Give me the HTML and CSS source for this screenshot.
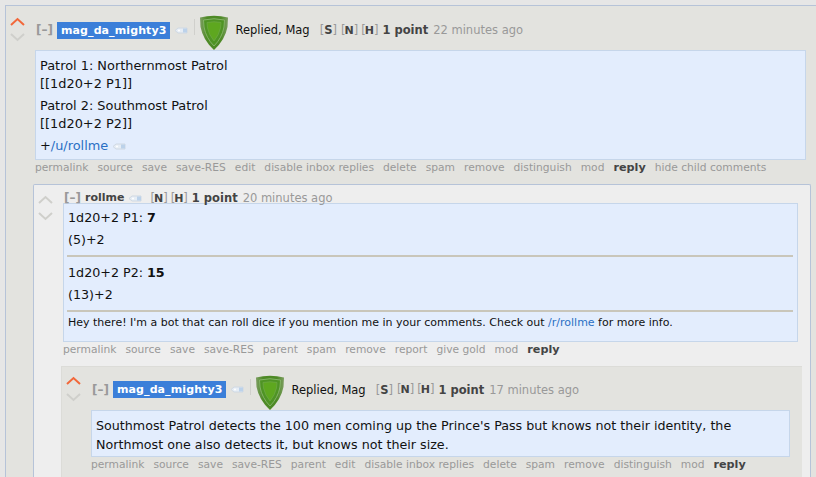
FILE: index.html
```html
<!DOCTYPE html>
<html lang="en">
<head>
<meta charset="utf-8">
<title>Comments</title>
<link rel="stylesheet" href="styles.css">
</head>
<body>
<svg class="defs" width="0" height="0">
  <defs>
    <linearGradient id="shield-edge" x1="0" y1="0" x2="1" y2="0">
      <stop offset="0" stop-color="#7d9e62"/>
      <stop offset="0.25" stop-color="#4e8a26"/>
      <stop offset="0.75" stop-color="#4e8a26"/>
      <stop offset="1" stop-color="#7d9e62"/>
    </linearGradient>
    <g id="shield">
      <path d="M0 2.5 Q14 -1 28 2.5 L27.5 12 Q25 25 14 35 Q3 25 .5 12Z" fill="url(#shield-edge)"/>
      <path d="M3.5 5 Q14 2.5 24.5 5 L24 12 Q22 23 14 31 Q6 23 4 12Z" fill="#4f9424" stroke="#84b368" stroke-width="1"/>
      <path d="M7 7.5 Q14 6 21 7.5 L20.5 13 Q19 20 14 26 Q9 20 7.5 13Z" fill="#5ea71f" stroke="#6ea84a" stroke-width=".7"/>
    </g>
    <g id="tag">
      <path d="M0 3.5 L3 1 H12 V6 H3Z" fill="#e6edf5" stroke="#cfd8e2" stroke-width="1"/>
      <rect x="8" y="1.5" width="4" height="4" fill="#bcd2ea"/>
      <circle cx="4" cy="3.5" r="1" fill="#fff"/>
    </g>
    <path id="up" d="M1 8 L7.5 2 L14 8" fill="none" stroke-width="2"/>
    <path id="down" d="M1 2 L7.5 8 L14 2" fill="none" stroke-width="2"/>
  </defs>
</svg>

<main class="thing level-a">
  <div class="votes">
    <svg class="arrow up-on" width="15" height="10"><use href="#up"/></svg>
    <svg class="arrow" width="15" height="10"><use href="#down"/></svg>
  </div>
  <div class="entry">
    <div class="tagline">
      <span class="collapse">[–]</span>
      <span class="author op">mag_da_mighty3</span>
      <svg class="tag" width="13" height="7"><use href="#tag"/></svg>
      <span class="rule"></span>
      <svg class="shield" width="28" height="36"><use href="#shield"/></svg>
      <span class="flair">Replied, Mag</span>
      <span class="mark"><span class="br">[</span><b>S</b><span class="br">]</span></span>
      <span class="mark mark-sm"><span class="br">[</span><b>N</b><span class="br">]</span></span>
      <span class="mark mark-sm"><span class="br">[</span><b>H</b><span class="br">]</span></span>
      <b class="score">1 point</b>
      <span class="time">22 minutes ago</span>
    </div>
    <div class="body body-a">
      <p>Patrol 1: Northernmost Patrol<br>[[1d20+2 P1]]</p>
      <p>Patrol 2: Southmost Patrol<br>[[1d20+2 P2]]</p>
      <p class="last">+<a href="#">/u/rollme</a><svg class="tag" width="13" height="7"><use href="#tag"/></svg></p>
    </div>
    <ul class="buttons">
      <li>permalink</li><li>source</li><li>save</li><li>save-RES</li><li>edit</li><li>disable inbox replies</li><li>delete</li><li>spam</li><li>remove</li><li>distinguish</li><li>mod</li><li class="reply">reply</li><li>hide child comments</li>
    </ul>

    <section class="thing level-b">
      <div class="votes votes-b">
        <svg class="arrow" width="15" height="10"><use href="#up"/></svg>
        <svg class="arrow" width="15" height="10"><use href="#down"/></svg>
      </div>
      <div class="entry">
        <div class="tagline tagline-b">
          <span class="collapse">[–]</span>
          <span class="author plain">rollme</span>
          <svg class="tag" width="13" height="7"><use href="#tag"/></svg>
          <span class="mark mark-sm mark-gap"><span class="br">[</span><b>N</b><span class="br">]</span></span>
          <span class="mark mark-sm"><span class="br">[</span><b>H</b><span class="br">]</span></span>
          <b class="score">1 point</b>
          <span class="time">20 minutes ago</span>
        </div>
        <div class="body body-b">
          <p>1d20+2 P1: <b>7</b></p>
          <p>(5)+2</p>
          <hr>
          <p>1d20+2 P2: <b>15</b></p>
          <p>(13)+2</p>
          <hr>
          <p class="small">Hey there! I'm a bot that can roll dice if you mention me in your comments. Check out <a href="#">/r/rollme</a> for more info.</p>
        </div>
        <ul class="buttons">
          <li>permalink</li><li>source</li><li>save</li><li>save-RES</li><li>parent</li><li>spam</li><li>remove</li><li>report</li><li>give gold</li><li>mod</li><li class="reply">reply</li>
        </ul>

        <section class="thing level-c">
          <div class="votes votes-c">
            <svg class="arrow up-on" width="15" height="10"><use href="#up"/></svg>
            <svg class="arrow" width="15" height="10"><use href="#down"/></svg>
          </div>
          <div class="entry">
            <div class="tagline tagline-c">
              <span class="collapse">[–]</span>
              <span class="author op">mag_da_mighty3</span>
              <svg class="tag" width="13" height="7"><use href="#tag"/></svg>
              <span class="rule"></span>
              <svg class="shield" width="28" height="36"><use href="#shield"/></svg>
              <span class="flair">Replied, Mag</span>
              <span class="mark"><span class="br">[</span><b>S</b><span class="br">]</span></span>
              <span class="mark mark-sm"><span class="br">[</span><b>N</b><span class="br">]</span></span>
              <span class="mark mark-sm"><span class="br">[</span><b>H</b><span class="br">]</span></span>
              <b class="score">1 point</b>
              <span class="time">17 minutes ago</span>
            </div>
            <div class="body body-c">
              <p>Southmost Patrol detects the 100 men coming up the Prince's Pass but knows not their identity, the Northmost one also detects it, but knows not their size.</p>
            </div>
            <ul class="buttons">
              <li>permalink</li><li>source</li><li>save</li><li>save-RES</li><li>parent</li><li>edit</li><li>disable inbox replies</li><li>delete</li><li>spam</li><li>remove</li><li>distinguish</li><li>mod</li><li class="reply">reply</li>
            </ul>
          </div>
        </section>
      </div>
    </section>
  </div>
</main>
</body>
</html>
```
FILE: styles.css
```css
html, body {
  margin: 0;
  padding: 0;
  height: 477px;
  overflow: hidden;
  background: #e6e6e6;
  font-family: "DejaVu Sans", Verdana, sans-serif;
  color: #1a1a1a;
}
.defs { position: absolute; }
.thing {
  display: flex;
  box-sizing: border-box;
  padding-left: 4px;
}
.level-a {
  margin: 5px 0 0 5px;
  width: 816px;
  background: #e3e3df;
  border-top: 1px solid #b6c3d8;
  border-left: 1px solid #b6c3d8;
  height: 480px;
}
.level-b {
  margin: 8px 6px 0 -2px;
  width: 778px;
  background: #eeeeee;
  border-top: 1px solid #b6c3d8;
  border-left: 1px solid #b6c3d8;
  border-right: 1px solid #b6c3d8;
  height: 300px;
  border-top-left-radius: 2px;
  border-top-right-radius: 2px;
}
.level-c {
  margin: 8px 8px 0 -2px;
  width: 741px;
  background: #e3e3df;
  border-top: 1px solid #dcdcd8;
  border-left: 1px solid #dcdcd8;
  height: 120px;
}
.votes {
  flex: none;
  width: 15px;
  padding: 11px 4px 0 0;
  display: flex;
  flex-direction: column;
  gap: 5px;
}
.votes-b { padding-top: 10px; gap: 6px; }
.votes-c { padding-top: 9px; gap: 6px; }
.arrow { stroke: #cfcfcb; display: block; }
.up-on { stroke: #f2683a; }
.entry { flex: 1; min-width: 0; padding-left: 6px; }
.tagline {
  box-sizing: border-box;
  display: flex;
  align-items: center;
  height: 44px;
  padding: 4px 0 0 1px;
  font-size: 11.5px;
  line-height: 16px;
  white-space: nowrap;
  color: #888;
}
.tagline-b { height: 18px; padding-top: 8px; }
.tagline-c { height: 43px; padding-top: 2px; }
.collapse { font-weight: bold; font-size: 12px; color: #999; margin-right: 4px; }
.author { font-weight: bold; font-size: 11px; }
.op {
  background: #3b7fd9;
  color: #fff;
  padding: 0 4px;
  height: 17px;
  line-height: 17px;
  letter-spacing: 0.1px;
}
.plain { color: #444; }
.tag { flex: none; margin-left: 5px; vertical-align: middle; }
.rule {
  width: 1px;
  height: 16px;
  background: #d0d0cc;
  margin: -6px 0 0 6px;
}
.shield { flex: none; margin: 5px 0 0 5px; align-self: flex-start; }
.tagline-c .shield { margin-top: 6px; }
.flair { margin-left: 7px; color: #111; }
.mark { margin-left: 4px; color: #444; }
.flair + .mark { margin-left: 10px; }
.mark-gap { margin-left: 8px; }
.mark b { color: #444; }
.br { font-weight: normal; color: #999; }
.mark-sm b { font-size: 11px; }
.mark-sm .br { letter-spacing: -1px; }
.score { color: #444; margin-left: 5px; font-size: 11.5px; }
.time { margin-left: 5px; color: #999; }
.body {
  box-sizing: border-box;
  background: #e3edfd;
  border: 1px solid #c6d6ea;
  padding: 6px 4px 1px;
  font-size: 12.7px;
  line-height: 18px;
  color: #111;
}
.body p { margin: 0 0 4px; }
.body a { color: #2a6fc4; text-decoration: none; }
.body-a { width: 771px; height: 110px; font-size: 12.9px; }
.body-a .last { margin-top: 4px; }
.body-b { width: 735px; height: 139px; padding-left: 3px; }
.body-b p { margin: 0 0 6px; line-height: 16px; padding-left: 1px; }
.body-b hr {
  border: 0;
  height: 2px;
  background: #c9c6ba;
  margin: 7px 0 8px;
}
.body-b .small { font-size: 11px; margin-top: -5px; }
.body-c { width: 699px; height: 47px; padding-top: 5px; }
.body-c p { line-height: 19px; }
.buttons {
  display: flex;
  list-style: none;
  margin: 0;
  padding: 0;
  gap: 9px;
  font-size: 10.7px;
  line-height: 16px;
  height: 16px;
  color: #999;
  white-space: nowrap;
}
.reply { font-weight: bold; color: #444; font-size: 11.2px; }
```
